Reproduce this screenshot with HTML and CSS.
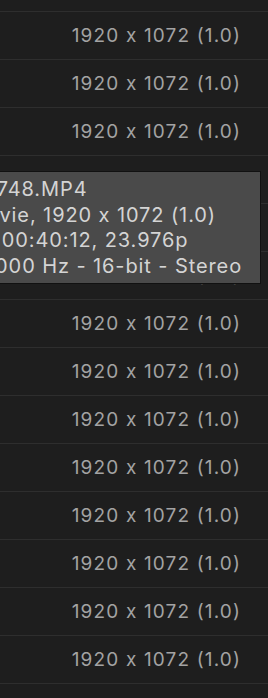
FILE: index.html
```html
<!DOCTYPE html>
<html lang="en">
<head>
    <meta charset="UTF-8">
    <meta name="viewport" content="width=device-width, initial-scale=1.0">
    <title>Clips</title>
    <link rel="stylesheet" href="styles.css">
</head>
<body>
    <div class="clip-list">
        <div class="clip-row">1920 x 1072 (1.0)</div>
        <div class="clip-row">1920 x 1072 (1.0)</div>
        <div class="clip-row">1920 x 1072 (1.0)</div>
        <div class="clip-row">1920 x 1072 (1.0)</div>
        <div class="clip-row">1920 x 1072 (1.0)</div>
        <div class="clip-row">1920 x 1072 (1.0)</div>
        <div class="clip-row">1920 x 1072 (1.0)</div>
        <div class="clip-row">1920 x 1072 (1.0)</div>
        <div class="clip-row">1920 x 1072 (1.0)</div>
        <div class="clip-row">1920 x 1072 (1.0)</div>
        <div class="clip-row">1920 x 1072 (1.0)</div>
        <div class="clip-row">1920 x 1072 (1.0)</div>
        <div class="clip-row">1920 x 1072 (1.0)</div>
        <div class="clip-row">1920 x 1072 (1.0)</div>
        <div class="clip-row">1920 x 1072 (1.0)</div>
        <div class="clip-row">1920 x 1072 (1.0)</div>
    </div>
    <!-- подсказка по клипу -->
    <div class="tooltip">
        <div>C0748.MP4</div>
        <div>Movie, 1920 x 1072 (1.0)</div>
        <div>00:00:40:12, 23.976p</div>
        <div>48000 Hz - 16-bit - Stereo</div>
    </div>
</body>
</html>
```

FILE: styles.css
```css
body {
    margin: 0;
    height: 100vh;
    overflow: hidden;
    background: #1e1e1e;
    font-family: Inter, "Open Sans", sans-serif;
    font-feature-settings: "calt" 0;
    position: relative;
}
.clip-list {
    margin-top: -36px;
}
.clip-row {
    height: 47px;
    border-bottom: 1px solid #2e2e2e;
    display: flex;
    align-items: center;
    justify-content: flex-end;
    padding-right: 27px;
    color: #a3a3a3;
    font-size: 19px;
    letter-spacing: 1.15px;
}
.tooltip {
    position: absolute;
    top: 171px;
    left: -41px;
    right: 7px;
    height: 113px;
    box-sizing: border-box;
    padding: 5px 8px;
    background: #4a4a4a;
    border: 1px solid #111;
    color: #d4d4d4;
    font-size: 20px;
    line-height: 25.5px;
    letter-spacing: 0.9px;
    white-space: nowrap;
    overflow: hidden;
}
```
